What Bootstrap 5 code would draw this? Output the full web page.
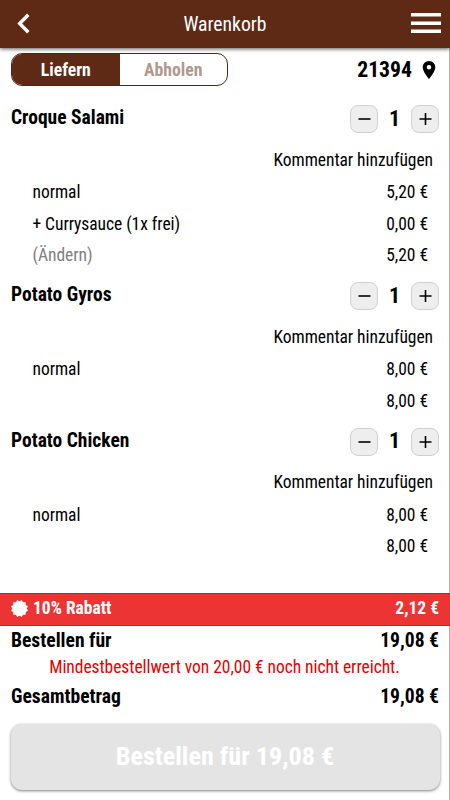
<!DOCTYPE html>
<html lang="de">
<head>
<meta charset="utf-8">
<meta name="viewport" content="width=device-width, initial-scale=1">
<title>Warenkorb</title>
<link href="https://cdn.jsdelivr.net/npm/bootstrap@5.3.0/dist/css/bootstrap.min.css" rel="stylesheet">
<style>
body{font-family:"Roboto Condensed",Roboto,sans-serif;font-stretch:75%;font-size:17.5px;line-height:1.2;color:#000;background:#fff}
.shell{height:800px;border-right:1px solid #b4b0ae}
.topbar{height:48px;width:450px;background:#5e2915;color:#fff;box-shadow:0 1px 4px rgba(0,0,0,.65);padding:0 9px 0 16px;font-size:20px}
.topbar h1{font-size:19.7px;font-weight:400;padding-right:7px;padding-top:2px}
.modes{width:217px;height:33px;border:1px solid #5e1f10;border-radius:11px}
.modes .btn{font-size:17.7px;font-weight:700;padding:0;border:0;border-radius:0;line-height:30px;color:#b2988d}
.modes .chosen{background:#5e2915;color:#fff}
.locrow{padding:5px 11px 0 11px;height:46.4px}
.zip{font-size:21.7px;font-weight:700;height:33px;padding-top:1px}
.zip svg{margin-bottom:1px}
.item-head{height:49.3px;padding:0 10px 0 11px}
.item-name{font-size:19.5px;font-weight:700;padding-bottom:2px}
.step{width:28px;height:28px;background:#eee;border:1px solid #d0d0d0;border-radius:8px;padding:0}
.qty{width:33px;font-size:22px;font-weight:700;text-align:center}
.comment{height:33px;padding-right:16px}
.comment,.line,.minimum{letter-spacing:-.05px}
.line{height:31.6px;padding:0 21px 0 32.5px}
.changer{color:#808080}
.summary{height:207.5px}
.rebate{height:33px;background:#ed3434;border-top:1px solid #e01616;border-bottom:1px solid #e01616;color:#fff;font-weight:700;padding:0 11px 1px 10px;font-size:17.5px;width:450px}
.total{font-size:19.6px;font-weight:700;padding:2px 10px 0 11px;height:29px}
.minimum{color:#e60000;height:26px}
.total-sum{padding-top:3px}
.order{height:66px;margin:14px 9.5px 0 10.5px;background:#e4e4e4;color:#fff;font-size:26.1px;font-weight:700;border:0;border-radius:11px;box-shadow:0 1px 3px rgba(0,0,0,.5);padding:0}
</style>
<script src="https://cdn.jsdelivr.net/npm/bootstrap@5.3.0/dist/js/bootstrap.bundle.min.js"></script>
</head>
<body>
<svg class="d-none">
<symbol id="minus" viewBox="0 0 26 26"><path d="M7.500 13h12" stroke="#000" stroke-width="1.600"/></symbol>
<symbol id="plus" viewBox="0 0 26 26"><path d="M7.500 13h12M13.500 7v12" stroke="#000" stroke-width="1.600"/></symbol>
</svg>
<div class="shell d-flex flex-column">
<header class="topbar d-flex align-items-center justify-content-between flex-shrink-0">
<svg width="30" height="22" viewBox="0 0 30 22" fill="none" stroke="#fff" stroke-width="3.400"><path d="M12.300 1.800 3.700 10.500l8.600 8.700"/></svg>
<h1 class="m-0">Warenkorb</h1>
<svg width="30" height="22" viewBox="0 0 30 22" fill="#fff"><path d="M0 0h30v3.500H0zM0 8.500h30V12H0zM0 16.500h30V20H0z"/></svg>
</header>
<div class="locrow d-flex justify-content-between align-items-start flex-shrink-0">
<div class="modes d-flex overflow-hidden"><button class="btn chosen w-50">Liefern</button><button class="btn w-50">Abholen</button></div>
<div class="zip d-flex align-items-center">21394<svg class="ms-2" width="18" height="20" viewBox="0 0 18 20"><path fill-rule="evenodd" d="M9 1a6.300 6.300 0 0 0-6.300 6.300C2.700 12 9 19 9 19s6.300-7 6.300-11.700A6.300 6.300 0 0 0 9 1zm0 4a2.300 2.300 0 1 1 0 4.600A2.300 2.300 0 0 1 9 5z"/></svg></div>
</div>
<main class="flex-grow-1 overflow-hidden">
<section>
<div class="item-head d-flex align-items-center justify-content-between"><div class="item-name">Croque Salami</div><div class="d-flex align-items-center"><button class="step d-flex"><svg><use href="#minus"/></svg></button><span class="qty">1</span><button class="step d-flex"><svg><use href="#plus"/></svg></button></div></div>
<div class="comment d-flex align-items-center justify-content-end">Kommentar hinzufügen</div>
<div class="line d-flex align-items-center justify-content-between"><span>normal</span><span>5,20 €</span></div>
<div class="line d-flex align-items-center justify-content-between"><span>+ Currysauce (1x frei)</span><span>0,00 €</span></div>
<div class="line d-flex align-items-center justify-content-between"><span class="changer">(Ändern)</span><span>5,20 €</span></div>
</section>
<section>
<div class="item-head d-flex align-items-center justify-content-between"><div class="item-name">Potato Gyros</div><div class="d-flex align-items-center"><button class="step d-flex"><svg><use href="#minus"/></svg></button><span class="qty">1</span><button class="step d-flex"><svg><use href="#plus"/></svg></button></div></div>
<div class="comment d-flex align-items-center justify-content-end">Kommentar hinzufügen</div>
<div class="line d-flex align-items-center justify-content-between"><span>normal</span><span>8,00 €</span></div>
<div class="line d-flex align-items-center justify-content-end"><span>8,00 €</span></div>
</section>
<section>
<div class="item-head d-flex align-items-center justify-content-between"><div class="item-name">Potato Chicken</div><div class="d-flex align-items-center"><button class="step d-flex"><svg><use href="#minus"/></svg></button><span class="qty">1</span><button class="step d-flex"><svg><use href="#plus"/></svg></button></div></div>
<div class="comment d-flex align-items-center justify-content-end">Kommentar hinzufügen</div>
<div class="line d-flex align-items-center justify-content-between"><span>normal</span><span>8,00 €</span></div>
<div class="line d-flex align-items-center justify-content-end"><span>8,00 €</span></div>
</section>
</main>
<footer class="summary d-flex flex-column flex-shrink-0">
<div class="rebate d-flex align-items-center justify-content-between flex-shrink-0"><span class="d-flex align-items-center"><svg width="19" height="18" viewBox="-9.500 -8.500 19 18" fill="#fff"><path id="sq" d="M-6.200-6.200H6.200V6.200H-6.200z"/><use href="#sq" transform="rotate(30)"/><use href="#sq" transform="rotate(60)"/></svg><span class="ms-1">10% Rabatt</span></span><span>2,12 €</span></div>
<div class="total d-flex align-items-center justify-content-between"><span>Bestellen für</span><span>19,08 €</span></div>
<div class="minimum d-flex align-items-center justify-content-center">Mindestbestellwert von 20,00 € noch nicht erreicht.</div>
<div class="total total-sum d-flex align-items-center justify-content-between"><span>Gesamtbetrag</span><span>19,08 €</span></div>
<button class="order flex-shrink-0">Bestellen für 19,08 €</button>
</footer>
</div>
</body>
</html>
